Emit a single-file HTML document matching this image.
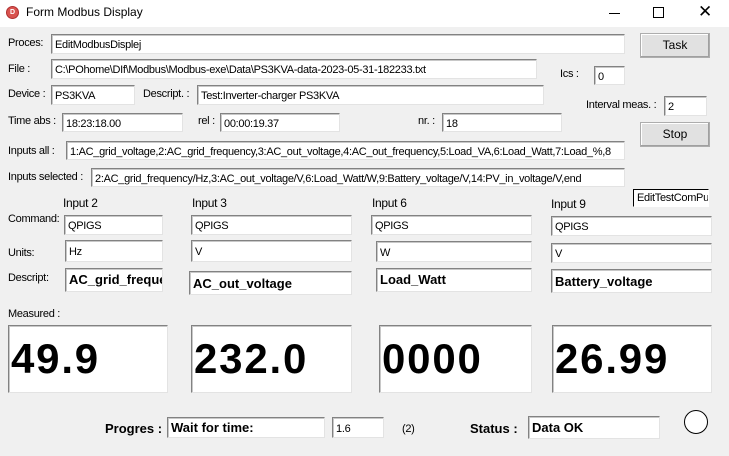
<!DOCTYPE html>
<html><head><meta charset="utf-8"><style>
*{margin:0;padding:0;box-sizing:border-box}
body{width:729px;height:456px;background:#f0f0f0;position:relative;overflow:hidden;font-family:"Liberation Sans",sans-serif;font-size:11px;color:#000}
.t{position:absolute;white-space:nowrap;letter-spacing:-0.3px}
.e{position:absolute;background:#fff;border-top:1px solid #828282;border-left:1px solid #828282;border-right:1px solid #e3e3e3;border-bottom:1px solid #e3e3e3;box-shadow:inset 1px 1px 0 #c8c8c8;padding:3px 0 0 3px;white-space:nowrap;overflow:hidden;letter-spacing:-0.3px;line-height:14px}
.b{font-weight:bold;font-size:13px;letter-spacing:0;padding-top:4px}
.big{font-weight:bold;font-size:42px;letter-spacing:1.8px;padding:10px 0 0 2px;line-height:46px}
.btn{position:absolute;background:#e1e1e1;border:1px solid #adadad;box-shadow:inset -1px -1px 0 #a0a0a0,inset 1px 1px 0 #fff;text-align:center;font-size:12px;line-height:22px}
</style></head><body>
<div style="position:absolute;left:0;top:0;width:729px;height:27px;background:#fff"></div>
<div style="position:absolute;left:6px;top:6px;width:13px;height:13px;border-radius:50%;background:#d9534f;border:1px solid #b03030;color:#fff;font-size:7px;font-weight:bold;text-align:center;line-height:11px">D</div>
<div class="t" style="left:26px;top:5px;font-size:12px;letter-spacing:0">Form Modbus Display</div>
<div style="position:absolute;left:609px;top:13px;width:11px;height:1px;background:#000"></div>
<div style="position:absolute;left:653px;top:7px;width:11px;height:11px;border:1px solid #000"></div>
<div class="t" style="left:698px;top:2px;font-size:17px">✕</div>

<div class="t" style="left:8px;top:37px">Proces:</div>
<div class="e" style="left:51px;top:34px;width:574px;height:20px">EditModbusDisplej</div>
<div class="btn" style="left:640px;top:33px;width:70px;height:25px">Task</div>

<div class="t" style="left:8px;top:63px">File :</div>
<div class="e" style="left:51px;top:59px;width:486px;height:20px">C:\POhome\DIf\Modbus\Modbus-exe\Data\PS3KVA-data-2023-05-31-182233.txt</div>
<div class="t" style="left:560px;top:68px">Ics :</div>
<div class="e" style="left:594px;top:66px;width:31px;height:19px">0</div>

<div class="t" style="left:8px;top:88px">Device :</div>
<div class="e" style="left:51px;top:85px;width:84px;height:20px">PS3KVA</div>
<div class="t" style="left:143px;top:88px">Descript. :</div>
<div class="e" style="left:197px;top:85px;width:347px;height:20px">Test:Inverter-charger PS3KVA</div>
<div class="t" style="left:586px;top:99px">Interval meas. :</div>
<div class="e" style="left:664px;top:96px;width:43px;height:20px">2</div>

<div class="t" style="left:8px;top:115px">Time abs :</div>
<div class="e" style="left:62px;top:113px;width:121px;height:19px">18:23:18.00</div>
<div class="t" style="left:198px;top:115px">rel :</div>
<div class="e" style="left:220px;top:113px;width:120px;height:19px">00:00:19.37</div>
<div class="t" style="left:418px;top:115px">nr. :</div>
<div class="e" style="left:442px;top:113px;width:120px;height:19px">18</div>
<div class="btn" style="left:640px;top:122px;width:70px;height:25px">Stop</div>

<div class="t" style="left:8px;top:145px">Inputs all :</div>
<div class="e" style="left:66px;top:141px;width:559px;height:19px">1:AC_grid_voltage,2:AC_grid_frequency,3:AC_out_voltage,4:AC_out_frequency,5:Load_VA,6:Load_Watt,7:Load_%,8</div>
<div class="t" style="left:8px;top:171px">Inputs selected :</div>
<div class="e" style="left:91px;top:168px;width:534px;height:19px">2:AC_grid_frequency/Hz,3:AC_out_voltage/V,6:Load_Watt/W,9:Battery_voltage/V,14:PV_in_voltage/V,end</div>
<div class="e" style="left:633px;top:189px;width:76px;height:18px;padding-top:1px;border-color:#000 #fff #fff #000;box-shadow:none">EditTestComPu</div>

<div class="t" style="left:63px;top:196px;font-size:12px">Input 2</div>
<div class="t" style="left:192px;top:196px;font-size:12px">Input 3</div>
<div class="t" style="left:372px;top:196px;font-size:12px">Input 6</div>
<div class="t" style="left:551px;top:197px;font-size:12px">Input 9</div>

<div class="t" style="left:8px;top:213px">Command:</div>
<div class="t" style="left:8px;top:247px">Units:</div>
<div class="t" style="left:8px;top:272px">Descript:</div>

<div class="e" style="left:64px;top:215px;width:99px;height:20px">QPIGS</div>
<div class="e" style="left:191px;top:215px;width:161px;height:20px">QPIGS</div>
<div class="e" style="left:371px;top:215px;width:161px;height:20px">QPIGS</div>
<div class="e" style="left:551px;top:216px;width:161px;height:20px">QPIGS</div>

<div class="e" style="left:65px;top:240px;width:98px;height:22px;padding-top:4px">Hz</div>
<div class="e" style="left:191px;top:240px;width:161px;height:22px;padding-top:4px">V</div>
<div class="e" style="left:376px;top:241px;width:156px;height:21px;padding-top:4px">W</div>
<div class="e" style="left:551px;top:243px;width:161px;height:20px">V</div>

<div class="e b" style="left:65px;top:268px;width:98px;height:24px">AC_grid_frequency</div>
<div class="e b" style="left:189px;top:271px;width:163px;height:24px;padding-top:5px">AC_out_voltage</div>
<div class="e b" style="left:376px;top:268px;width:156px;height:24px">Load_Watt</div>
<div class="e b" style="left:551px;top:269px;width:161px;height:24px;padding-top:5px">Battery_voltage</div>

<div class="t" style="left:8px;top:308px">Measured :</div>
<div class="e big" style="left:8px;top:325px;width:160px;height:68px">49.9</div>
<div class="e big" style="left:191px;top:325px;width:161px;height:68px">232.0</div>
<div class="e big" style="left:379px;top:325px;width:153px;height:68px">0000</div>
<div class="e big" style="left:552px;top:325px;width:160px;height:68px">26.99</div>

<div class="t" style="left:105px;top:421px;font-size:13px;font-weight:bold;letter-spacing:0">Progres :</div>
<div class="e b" style="left:167px;top:417px;width:158px;height:21px;padding-top:3px">Wait for time:</div>
<div class="e" style="left:332px;top:417px;width:52px;height:21px;padding-top:4px">1.6</div>
<div class="t" style="left:402px;top:423px">(2)</div>
<div class="t" style="left:470px;top:421px;font-size:13px;font-weight:bold;letter-spacing:0">Status :</div>
<div class="e b" style="left:528px;top:416px;width:132px;height:23px">Data OK</div>
<div style="position:absolute;left:684px;top:410px;width:24px;height:24px;border-radius:50%;border:1px solid #000;background:#fff"></div>
</body></html>
